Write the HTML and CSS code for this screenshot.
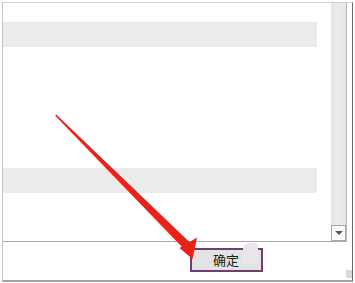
FILE: index.html
```html
<!DOCTYPE html>
<html lang="zh">
<head>
<meta charset="utf-8">
<link rel="stylesheet" href="styles.css">
</head>
<body>
<div class="frame">
  <div class="list">
    <div class="rows">
      <div class="row"></div>
      <div class="row row-second"></div>
    </div>
    <div class="scrollbar">
      <div class="track"></div>
      <div class="down-btn"><span class="tri"></span></div>
    </div>
  </div>
  <div class="footer">
    <button class="ok">确定</button>
  </div>
</div>
<div class="blob"></div>
<div class="grip"></div>
<svg class="arrow" width="355" height="283" viewBox="0 0 355 283">
  <polygon points="56,114.3 57.3,115.5 190,242.5 183.5,248.5 55.3,115.7" fill="#e8231c"/>
  <polygon points="192.5,259 179.5,248 197,237.5" fill="#ea2118"/>
</svg>
</body>
</html>
```
FILE: styles.css
```css
html, body {
  margin: 0;
  padding: 0;
  background: #ffffff;
  width: 355px;
  height: 283px;
  overflow: hidden;
  font-family: "Noto Sans CJK SC", "Noto Sans", sans-serif;
}
.frame {
  margin: 2px 0 0 2px;
  width: 349px;
  height: 277px;
  border-top: 1px solid #cfcfcf;
  border-left: 1px solid #c4c4c4;
  border-right: 1px solid #6a6a6a;
  border-bottom: 2px solid #a2a2a2;
  display: flex;
  flex-direction: column;
}
.list {
  height: 238px;
  margin-right: 5px;
  border-bottom: 1px solid #a9a9a9;
  border-right: 1px solid #b8b8b8;
  display: flex;
}
.rows {
  flex: 1;
  padding-top: 19px;
  display: flex;
  flex-direction: column;
}
.row {
  height: 25px;
  width: 314px;
  background: #ebebeb;
}
.row-second {
  margin-top: 121px;
}
.scrollbar {
  width: 15px;
  display: flex;
  flex-direction: column;
}
.track {
  flex: 1;
  background: linear-gradient(90deg, #e2e2e2 0, #ebebeb 40%, #e6e6e6 100%);
}
.down-btn {
  height: 14px;
  border: 1px solid #a8a8a8;
  background: #fbfbfb;
  display: flex;
  align-items: center;
  justify-content: center;
}
.tri {
  width: 0;
  height: 0;
  border-left: 4px solid transparent;
  border-right: 4px solid transparent;
  border-top: 4px solid #555;
}
.footer {
  flex: 1;
  padding: 4px 0 0 187px;
}
.ok {
  width: 73px;
  height: 24px;
  margin: 0;
  padding: 0;
  border: 2px solid #6f3d70;
  background: #e3e3e3;
  color: #1a1a1a;
  font-family: "Noto Sans CJK SC", sans-serif;
  font-size: 13px;
  line-height: 20px;
  text-align: left;
  text-indent: 21px;
}
.blob {
  position: absolute;
  left: 243px;
  top: 243px;
  width: 15px;
  height: 21px;
  background: #e9e6e9;
  border-radius: 6px 3px 0 0;
}
.grip {
  position: absolute;
  left: 346px;
  top: 270px;
  width: 6px;
  height: 8px;
  background-image: radial-gradient(circle, #c4c4c4 0.6px, transparent 0.9px);
  background-size: 2px 2px;
}
.arrow {
  position: absolute;
  left: 0;
  top: 0;
}
```
